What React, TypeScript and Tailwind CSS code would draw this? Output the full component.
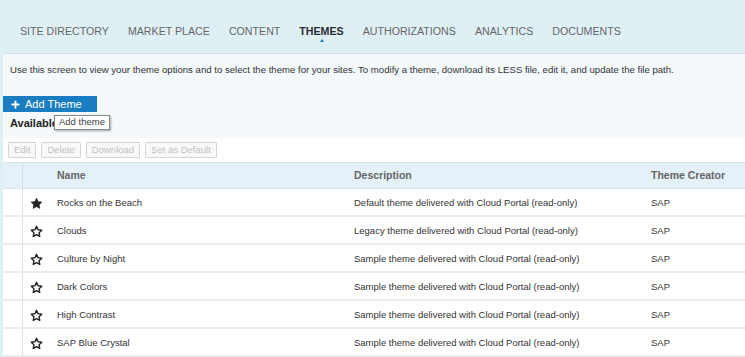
import { Plus } from "lucide-react";

const navItems = [
  "SITE DIRECTORY",
  "MARKET PLACE",
  "CONTENT",
  "THEMES",
  "AUTHORIZATIONS",
  "ANALYTICS",
  "DOCUMENTS",
];

const themes = [
  { name: "Rocks on the Beach", desc: "Default theme delivered with Cloud Portal (read-only)", isDefault: true },
  { name: "Clouds", desc: "Legacy theme delivered with Cloud Portal (read-only)" },
  { name: "Culture by Night", desc: "Sample theme delivered with Cloud Portal (read-only)" },
  { name: "Dark Colors", desc: "Sample theme delivered with Cloud Portal (read-only)" },
  { name: "High Contrast", desc: "Sample theme delivered with Cloud Portal (read-only)" },
  { name: "SAP Blue Crystal", desc: "Sample theme delivered with Cloud Portal (read-only)" },
];

function Star({ filled }: { filled?: boolean }) {
  return (
    <svg width="13" height="13" viewBox="0 0 24 24">
      <path
        d="M12 2.5l2.9 6.2 6.8.8-5 4.7 1.3 6.7L12 17.6l-6 3.3 1.3-6.7-5-4.7 6.8-.8z"
        fill={filled ? "#222" : "none"}
        stroke="#222"
        strokeWidth={filled ? 1.5 : 2.6}
        strokeLinejoin="round"
      />
    </svg>
  );
}

function ToolButton({ label }: { label: string }) {
  return (
    <div className="h-[16px] px-[5px] flex items-center border border-[#d4d4d4] bg-[#f8f8f8] text-[9.5px] text-[#c2c2c2] rounded-[1px]">
      {label}
    </div>
  );
}

export default function App() {
  return (
    <div
      className="w-[745px] h-[357px] overflow-hidden bg-[#dff0f5] flex flex-col"
      style={{ fontFamily: '"Liberation Sans", Arial, sans-serif' }}
    >
      {/* Top navigation */}
      <div className="h-[53px] shrink-0 flex items-start pt-[24px] pl-[20px] gap-[19px]">
        {navItems.map((item) => (
          <div
            key={item}
            className={
              item === "THEMES"
                ? "relative text-[10.65px] leading-[14px] font-bold text-[#2b2b33]"
                : "relative text-[10.65px] leading-[14px] text-[#666]"
            }
          >
            {item}
            {item === "THEMES" && (
              <span className="absolute left-1/2 -translate-x-1/2 top-[15px] w-0 h-0 border-l-[2px] border-r-[2px] border-b-[3px] border-l-transparent border-r-transparent border-b-[#1a7cc1]" />
            )}
          </div>
        ))}
      </div>

      {/* Main panel */}
      <div className="ml-[3px] flex-1 bg-white border-t border-[#d3e2e8] flex flex-col">
        <div className="relative h-[84px] bg-[#f4f9fb]">
          <p className="pt-[10px] pl-[7px] text-[9.6px] leading-[12px] text-[#333]">
            Use this screen to view your theme options and to select the theme for your sites. To modify a theme, download its LESS file, edit it, and update the file path.
          </p>
          <button className="mt-[20px] w-[94px] h-[16px] bg-[#1a7cc1] text-white text-[11px] flex items-center pl-[7px] gap-[4px]">
            <Plus size={11} strokeWidth={4} />
            <span>Add Theme</span>
          </button>
          <div className="pl-[7px] pt-[4px] text-[11px] font-bold text-[#222] leading-[14px]">
            Available Themes
          </div>
          <div className="absolute left-[51px] top-[61px] h-[15px] px-[4px] flex items-center bg-white border border-[#8a8a8a] shadow-[1px_1px_2px_rgba(0,0,0,0.35)] text-[9.5px] text-[#444]">
            Add theme
          </div>
        </div>

        {/* Toolbar */}
        <div className="h-[24px] flex items-center gap-[5px] pl-[5px]">
          <ToolButton label="Edit" />
          <ToolButton label="Delete" />
          <ToolButton label="Download" />
          <ToolButton label="Set as Default" />
        </div>

        {/* Table */}
        <div className="flex-1 flex flex-col">
          <div className="h-[27px] flex items-stretch bg-[#e4f1f8] border-t border-[#d8e6ec] border-b border-b-[#d5e4ea] text-[10.5px] font-bold text-[#666]">
            <div className="w-[20px] border-r border-[#d6dde0]" />
            <div className="w-[34px]" />
            <div className="w-[297px] flex items-center">Name</div>
            <div className="w-[297px] flex items-center">Description</div>
            <div className="flex-1 flex items-center">Theme Creator</div>
          </div>
          {themes.map((t) => (
            <div
              key={t.name}
              className="h-[28px] shrink-0 flex items-stretch pt-[2px] border-b-2 border-[#ebebeb] text-[9.5px] text-[#333]"
            >
              <div className="w-[20px] -mt-[2px] border-r border-[#dcdcdc]" />
              <div className="w-[34px] flex items-center pl-[7px]">
                <Star filled={t.isDefault} />
              </div>
              <div className="w-[297px] flex items-center">{t.name}</div>
              <div className="w-[297px] flex items-center">{t.desc}</div>
              <div className="flex-1 flex items-center">SAP</div>
            </div>
          ))}
        </div>
      </div>
    </div>
  );
}
